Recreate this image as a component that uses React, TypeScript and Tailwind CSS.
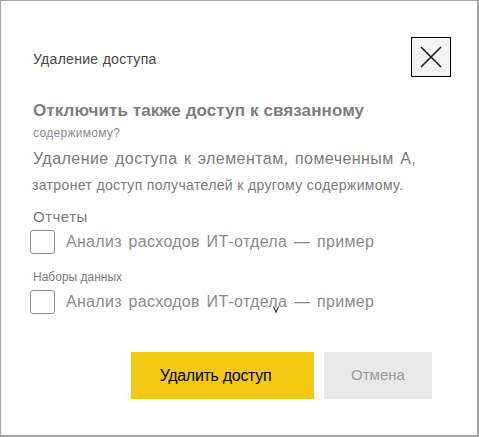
import React from "react";

function Checkbox() {
  return <div className="w-[25px] h-[24px] border border-[#8a8a8a] rounded-[3px] shrink-0 bg-white" />;
}

export default function App() {
  return (
    <div
      className="w-[479px] h-[437px] bg-white border-l border-t border-r-2 border-b-2 border-[#a3a3a3] relative"
      style={{ fontFamily: '"Liberation Sans", Arial, sans-serif' }}
    >
      <div className="flex items-start justify-between pt-[36px] pl-[32px] pr-[26px]">
        <div className="mt-[12px] text-[14px] leading-[20px] text-[#444444] tracking-[0.3px]">Удаление доступа</div>
        <button className="w-[40px] h-[40px] border border-black bg-[#f3f3f3] flex items-center justify-center">
          <svg width="22" height="22" viewBox="0 0 22 22">
            <path d="M1 1 L21 21 M21 1 L1 21" stroke="#1a1a1a" strokeWidth="1.6" fill="none" />
          </svg>
        </button>
      </div>
      <div className="pl-[32px]">
        <div className="mt-[24px] text-[17px] leading-[20px] font-bold text-[#7d7d7d] tracking-[0.1px]">
          Отключить также доступ к связанному
        </div>
        <div className="mt-[4px] text-[12px] leading-[16px] text-[#8a8a8a] tracking-[0.3px]">содержимому?</div>
        <div className="mt-[8px] text-[16px] leading-[20px] text-[#7a7a7a] tracking-[0.45px] [word-spacing:1.5px]">
          Удаление доступа к элементам, помеченным А,
        </div>
        <div className="mt-[7px] -ml-[1px] text-[14px] leading-[18px] text-[#7a7a7a] tracking-[0.35px]">
          затронет доступ получателей к другому содержимому.
        </div>
        <div className="mt-[14px] text-[15px] leading-[18px] text-[#7a7a7a] tracking-[0.5px]">Отчеты</div>
        <div className="mt-[4px] -ml-[3px] flex items-center gap-[11px] h-[24px]">
          <Checkbox />
          <span className="text-[16px] leading-[24px] text-[#8a8a8a] tracking-[0.3px] [word-spacing:2px]">
            Анализ расходов ИТ-отдела — пример
          </span>
        </div>
        <div className="mt-[15px] text-[12px] leading-[16px] text-[#7a7a7a]">Наборы данных</div>
        <div className="mt-[5px] -ml-[3px] flex items-center gap-[11px] h-[24px] relative">
          <Checkbox />
          <span className="text-[16px] leading-[24px] text-[#8a8a8a] tracking-[0.3px] [word-spacing:2px]">
            Анализ расходов ИТ-отдела — пример
          </span>
          <svg className="absolute left-[243px] top-[16px]" width="6" height="8" viewBox="0 0 6 8">
            <path d="M0.5 0.5 L3 6 L5.5 0.5" stroke="#333" strokeWidth="1.2" fill="none" />
          </svg>
        </div>
      </div>
      <div className="mt-[38px] pl-[130px] flex gap-[10px]">
        <button className="w-[183px] h-[47px] bg-[#f2c811] text-[16px] text-black tracking-[-0.3px] pr-[14px]">
          Удалить доступ
        </button>
        <button className="w-[108px] h-[47px] bg-[#e9e9e9] text-[15px] text-[#9a9a9a]">Отмена</button>
      </div>
    </div>
  );
}
